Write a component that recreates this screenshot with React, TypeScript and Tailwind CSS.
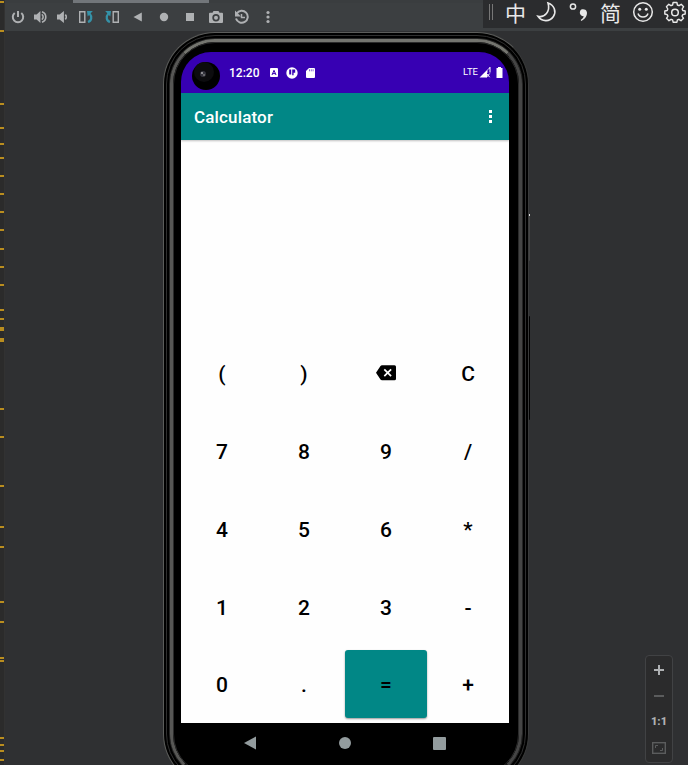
import React from "react";

const marks: [number, number][] = [
  [1, 2], [30, 2], [103, 2], [127, 2], [143, 2], [157, 2], [175, 2], [193, 2], [211, 2], [229, 2],
  [248, 2], [266, 2], [284, 2], [309, 2], [318, 2], [327, 4], [338, 4], [408, 2], [436, 2], [485, 2],
  [526, 2], [546, 2], [601, 2], [621, 2], [657, 2], [660, 2], [737, 2], [744, 2], [750, 2], [759, 2],
];

const keys = ["(", ")", "del", "C", "7", "8", "9", "/", "4", "5", "6", "*", "1", "2", "3", "-", "0", ".", "=", "+"];

function Icon({ w = 16, h = 16, className = "", children }: { w?: number; h?: number; className?: string; children: React.ReactNode }) {
  return (
    <svg width={w} height={h} viewBox={`0 0 ${w} ${h}`} className={`shrink-0 ${className}`} fill="none">
      {children}
    </svg>
  );
}

function Toolbar() {
  return (
    <div className="flex h-[28px] shrink-0 items-center bg-[#3c3f41] pl-[5px] text-[#afb1b3]">
      <Icon className="mr-[6px]">
        <path d="M8 2v6M4.700 4a5.200 5.200 0 1 0 6.600 0" stroke="currentColor" strokeWidth="2" />
      </Icon>
      <Icon className="mr-[6px]">
        <path d="M2 5.500h2.600L8.400 2v12L4.600 10.500H2z" fill="currentColor" />
        <path d="M9.800 5.400a3.200 3.200 0 0 1 0 5.200M10 2.700a5.600 5.600 0 0 1 0 10.600" stroke="currentColor" strokeWidth="1.600" />
      </Icon>
      <Icon className="mr-[8px]">
        <path d="M3 5.500h2.600L9.900 2v12L5.600 10.500H3z" fill="currentColor" />
        <path d="M11.300 5.600a3.400 3.400 0 0 1 0 4.800" stroke="currentColor" strokeWidth="1.600" />
      </Icon>
      <Icon className="mr-[10px]">
        <path d="M1.700 2.700h5.100v10.600H1.700z" stroke="currentColor" strokeWidth="1.400" />
        <path d="M10 13c3.800-1.400 4.200-5.300 1.700-8.200" stroke="#3592a8" strokeWidth="2.200" />
        <path d="M9 2h5.800L9.700 7.500z" fill="#3592a8" />
      </Icon>
      <Icon className="mr-[10px]">
        <path d="M9.200 2.700h5.100v10.600H9.200z" stroke="currentColor" strokeWidth="1.400" />
        <path d="M6 13C2.200 11.600 1.800 7.700 4.300 4.800" stroke="#3592a8" strokeWidth="2.200" />
        <path d="M7 2H1.200l5.100 5.500z" fill="#3592a8" />
      </Icon>
      <Icon className="mr-[10px]"><path d="M11.800 3.500v9L3.500 8z" fill="currentColor" /></Icon>
      <Icon className="mr-[10px]"><circle cx="8" cy="8" r="4.200" fill="currentColor" /></Icon>
      <Icon className="mr-[10px]"><rect x="4" y="4" width="8" height="8" fill="currentColor" /></Icon>
      <Icon className="mr-[9px]">
        <path fillRule="evenodd" d="M5.500 2h5l1 1.800H14a1 1 0 0 1 1 1V13a1 1 0 0 1-1 1H2a1 1 0 0 1-1-1V4.800a1 1 0 0 1 1-1h2.500zM8 5a3.700 3.700 0 1 0 0 7.400A3.700 3.700 0 0 0 8 5z" fill="currentColor" />
        <circle cx="8" cy="8.700" r="2" fill="currentColor" />
      </Icon>
      <Icon className="mr-[11px]">
        <path d="M3.700 4.500a6 6 0 1 1-.7 5" stroke="currentColor" strokeWidth="2" />
        <path d="M2 1.500v6h6z" fill="currentColor" />
        <path d="M8.500 5v3.600H12" stroke="currentColor" strokeWidth="1.500" />
      </Icon>
      <Icon>
        <circle cx="8" cy="3.500" r="1.600" fill="currentColor" />
        <circle cx="8" cy="8" r="1.600" fill="currentColor" />
        <circle cx="8" cy="12.500" r="1.600" fill="currentColor" />
      </Icon>
    </div>
  );
}

function InputBar() {
  return (
    <div className="absolute right-0 top-0 flex h-[28px] w-[205px] items-center bg-[#2b2c2e] pb-[4px] pl-[6px] font-['Liberation_Sans','Noto_Sans_CJK_SC',sans-serif] text-[21px] leading-[24px] text-[#e8e8e8]">
      <div className="mr-[12px] h-[16px] w-[4px] border-x border-[#777]" />
      <span className="w-[21px] shrink-0 pt-[3px]">中</span>
      <Icon w={22} h={22} className="ml-[10px]">
        <path d="M12 2c6.500 2.300 8.500 8.700 5.400 13.500C14 20.700 6 21.300 2 15.300c6.600 1.600 12.600-4.800 10-13.300z" stroke="currentColor" strokeWidth="1.600" />
      </Icon>
      <Icon w={22} h={22} className="ml-[10px]">
        <circle cx="5" cy="5.500" r="2.600" stroke="currentColor" strokeWidth="1.500" />
        <path d="M14 8.300c4.200-.8 5.800 2.600 4.700 5.800-.9 2.700-2.700 4.700-5.300 5.900l-.7-1.100c1.800-1 2.700-2.200 3-3.600-4.600.1-5-5.900-1.700-7z" fill="currentColor" />
      </Icon>
      <span className="ml-[10px] w-[21px] shrink-0 pt-[3px]">简</span>
      <Icon w={22} h={22} className="ml-[11px]">
        <circle cx="11" cy="11" r="9.300" stroke="currentColor" strokeWidth="1.500" />
        <circle cx="7.700" cy="8.300" r="1.500" fill="currentColor" />
        <circle cx="14.300" cy="8.300" r="1.500" fill="currentColor" />
        <path d="M6 12.500c1.500 4.500 8.500 4.500 10 0" stroke="currentColor" strokeWidth="1.500" />
      </Icon>
      <Icon w={22} h={22} className="ml-[10px]">
        <path strokeLinejoin="round" d="M9.100 1.500h3.800l.5 2.500 1.600.7 2.200-1.400 2.400 2.400L18.200 8l.6 1.500 2.400.5v3l-2.400.6-.7 1.500 1.400 2.200-2.500 2.400-2.100-1.400-1.500.6-.5 2.300H9.100l-.5-2.300-1.500-.6L5 19.700l-2.500-2.400 1.400-2.200-.7-1.500L.8 13v-3l2.400-.5L3.800 8 2.400 5.700l2.400-2.400L7 4.700 8.600 4z" stroke="currentColor" strokeWidth="1.400" />
        <circle cx="11" cy="11.500" r="3.300" stroke="currentColor" strokeWidth="1.500" />
      </Icon>
    </div>
  );
}

function StatusBar() {
  return (
    <div className="flex h-[41px] shrink-0 items-center bg-[#3700b3] pl-[11px] pr-[6px] text-white">
      <div className="relative mt-[7px] size-[28px] shrink-0 rounded-full bg-black">
        <div className="absolute left-[2px] top-0 size-[20px] rounded-full bg-[#0c0c0e]" />
        <div className="absolute left-[8px] top-[9px] size-[6px] rounded-full bg-[#33333c]" />
        <div className="absolute left-[9px] top-[10px] size-[2px] rounded-full bg-[#aaa]" />
        <div className="absolute left-[11px] top-[12px] size-[2px] rounded-full bg-[#777]" />
      </div>
      <span className="ml-[9px] w-[41px] text-[12px] font-medium">12:20</span>
      <Icon w={8} h={9}>
        <rect width="8" height="9" rx="1" fill="#fff" />
        <path d="M2 7L4 2.300 6 7M2.700 5.600h2.600" stroke="#3700b3" strokeWidth="1" />
      </Icon>
      <Icon w={12} h={12} className="ml-[8px]">
        <circle cx="6" cy="6" r="5.700" fill="#fff" />
        <path d="M3.200 2.500h2v5h-2zM6.200 2.500h3v3.200H7.600V8.300H6.200z" fill="#3700b3" />
      </Icon>
      <Icon w={9} h={10} className="ml-[8px]">
        <path d="M3 0h5a1 1 0 0 1 1 1v8a1 1 0 0 1-1 1H1a1 1 0 0 1-1-1V3z" fill="#fff" />
        <path d="M3.500 1.300v2M5.300 1.300v2M7.100 1.300v2" stroke="#3700b3" strokeWidth=".6" />
      </Icon>
      <span className="ml-auto text-[9.500px]">LTE</span>
      <Icon w={12} h={11} className="ml-[1px]">
        <path d="M11 0v5L8 6v4.500H.5z" fill="#fff" />
        <path d="M8.500 3v3h3V1z" fill="#3700b3" />
        <path d="M11 0v5.500M7.500 6.500l3.200 3.700M10.700 6.500l-3.200 3.700" stroke="#fff" strokeWidth="1" />
      </Icon>
      <Icon w={7} h={11} className="ml-[5px]">
        <path d="M2 0h3v1h1.500v10h-6V1H2z" fill="#fff" />
      </Icon>
    </div>
  );
}

function Phone() {
  return (
    <div className="relative ml-[159px] mt-[1px] w-[366px] shrink-0">
      <div className="absolute left-[365px] top-[182px] h-[47px] w-[2px] rounded bg-[#454545]" />
      <div className="absolute left-[365px] top-[182px] h-[2px] w-[2px] bg-[#ddd]" />
      <div className="absolute left-[365px] top-[284px] h-[104px] w-[2px] rounded bg-black" />
      <div className="relative rounded-[52px] border border-[#5c5d5b] border-r-[#3a3b3b] bg-black p-[2px]">
        <div className="rounded-[49px] border border-[#303030] p-[2px]">
          <div className="rounded-[46px] border border-[#252525]">
            <div className="rounded-[45px] border-[3px] border-l-[#575755] border-r-[#454545] border-t-[#74756f] border-b-[#1c1c1c]">
              <div className="rounded-[42px] border border-[#2b2b2b] bg-black pb-[8px] pl-[7px] pr-[9px] pt-[9px]">
                <div className="flex h-[715px] flex-col overflow-hidden rounded-[30px] bg-black font-[Roboto,sans-serif]">
                  <StatusBar />
                  <div className="z-10 flex h-[47px] shrink-0 items-center justify-between bg-[#018786] pl-[13px] pr-[17px] text-white shadow-[0_1px_2px_rgba(0,0,0,0.25)]">
                    <span className="pt-[2px] text-[17px] font-medium tracking-[0.15px]">Calculator</span>
                    <div className="flex flex-col gap-[2px]">
                      <i className="size-[3px] bg-white" />
                      <i className="size-[3px] bg-white" />
                      <i className="size-[3px] bg-white" />
                    </div>
                  </div>
                  <div className="flex h-[583px] shrink-0 flex-col justify-end bg-[#fefefe]">
                    <div className="grid h-[389px] grid-cols-4 grid-rows-5 text-[21px] font-medium text-black">
                      {keys.map((k) => (
                        <div
                          key={k}
                          className={
                            k === "="
                              ? "my-[5px] flex items-center justify-center rounded-[3px] bg-[#018786] pt-[4px] shadow-[0_1px_2px_rgba(0,0,0,0.4)]"
                              : k === "del"
                                ? "flex items-center justify-center pt-[1px]"
                                : "flex items-center justify-center pt-[4px]"
                          }
                        >
                          {k === "del" ? (
                            <Icon w={20} h={16}>
                              <path d="M6 .3h12.500a1.500 1.500 0 0 1 1.500 1.500v12a1.500 1.500 0 0 1-1.500 1.500H6a2 2 0 0 1-1.500-.8L0 7.800l4.500-6.700A2 2 0 0 1 6 .3z" fill="#000" />
                              <path d="M8.300 4.300l6.800 6.900M15.100 4.300l-6.800 6.900" stroke="#fff" strokeWidth="1.700" />
                            </Icon>
                          ) : (
                            k
                          )}
                        </div>
                      ))}
                    </div>
                  </div>
                  <div className="flex h-[40px] shrink-0 items-center justify-center gap-[82px] pr-px text-[#939c9e]">
                    <Icon w={13} h={14}><path d="M12 .5v13L0 7z" fill="currentColor" /></Icon>
                    <Icon w={12} h={12}><circle cx="6" cy="6" r="6" fill="currentColor" /></Icon>
                    <Icon w={13} h={13}><rect width="13" height="13" rx="1" fill="currentColor" /></Icon>
                  </div>
                </div>
              </div>
            </div>
          </div>
        </div>
      </div>
    </div>
  );
}

export default function App() {
  return (
    <div className="relative flex h-[765px] w-[688px] overflow-hidden bg-[#2f3032]">
      <div className="relative w-[4px] shrink-0 bg-[#2b2b2b]">
        {marks.map(([y, h]) => (
          <div key={y} className="absolute left-0 w-[4px] bg-[#b98d1f]" style={{ top: y, height: h }} />
        ))}
      </div>
      <div className="flex min-w-0 flex-1 flex-col border-l border-[#323232]">
        <div className="flex h-[3px] shrink-0 bg-[#3a3d3f]">
          <div className="ml-[68px] w-[136px] bg-[#72767a]" />
        </div>
        <Toolbar />
        <div className="-ml-px flex h-[734px] flex-col">
          <Phone />
        </div>
      </div>
      <InputBar />
      <div className="absolute left-[645px] top-[655px] flex h-[108px] w-[28px] flex-col items-center rounded-[4px] border border-[#414244] bg-[#2b2b2c] text-[#afb1b3]">
        <Icon w={12} h={12} className="mt-[8px]"><path d="M6 1v10M1 6h10" stroke="currentColor" strokeWidth="2" /></Icon>
        <div className="mt-[19px] h-[2px] w-[10px] bg-[#5b5c5d]" />
        <span className="mt-[18px] font-['Roboto',sans-serif] text-[11px] font-black leading-[14px]">1:1</span>
        <Icon w={14} h={12} className="mt-[13px] text-[#5b5c5d]">
          <rect x=".7" y=".7" width="12.600" height="10.600" stroke="currentColor" strokeWidth="1.400" />
          <path d="M3.500 6V3.500H6M10.500 6v2.500H8" stroke="currentColor" />
        </Icon>
      </div>
    </div>
  );
}
